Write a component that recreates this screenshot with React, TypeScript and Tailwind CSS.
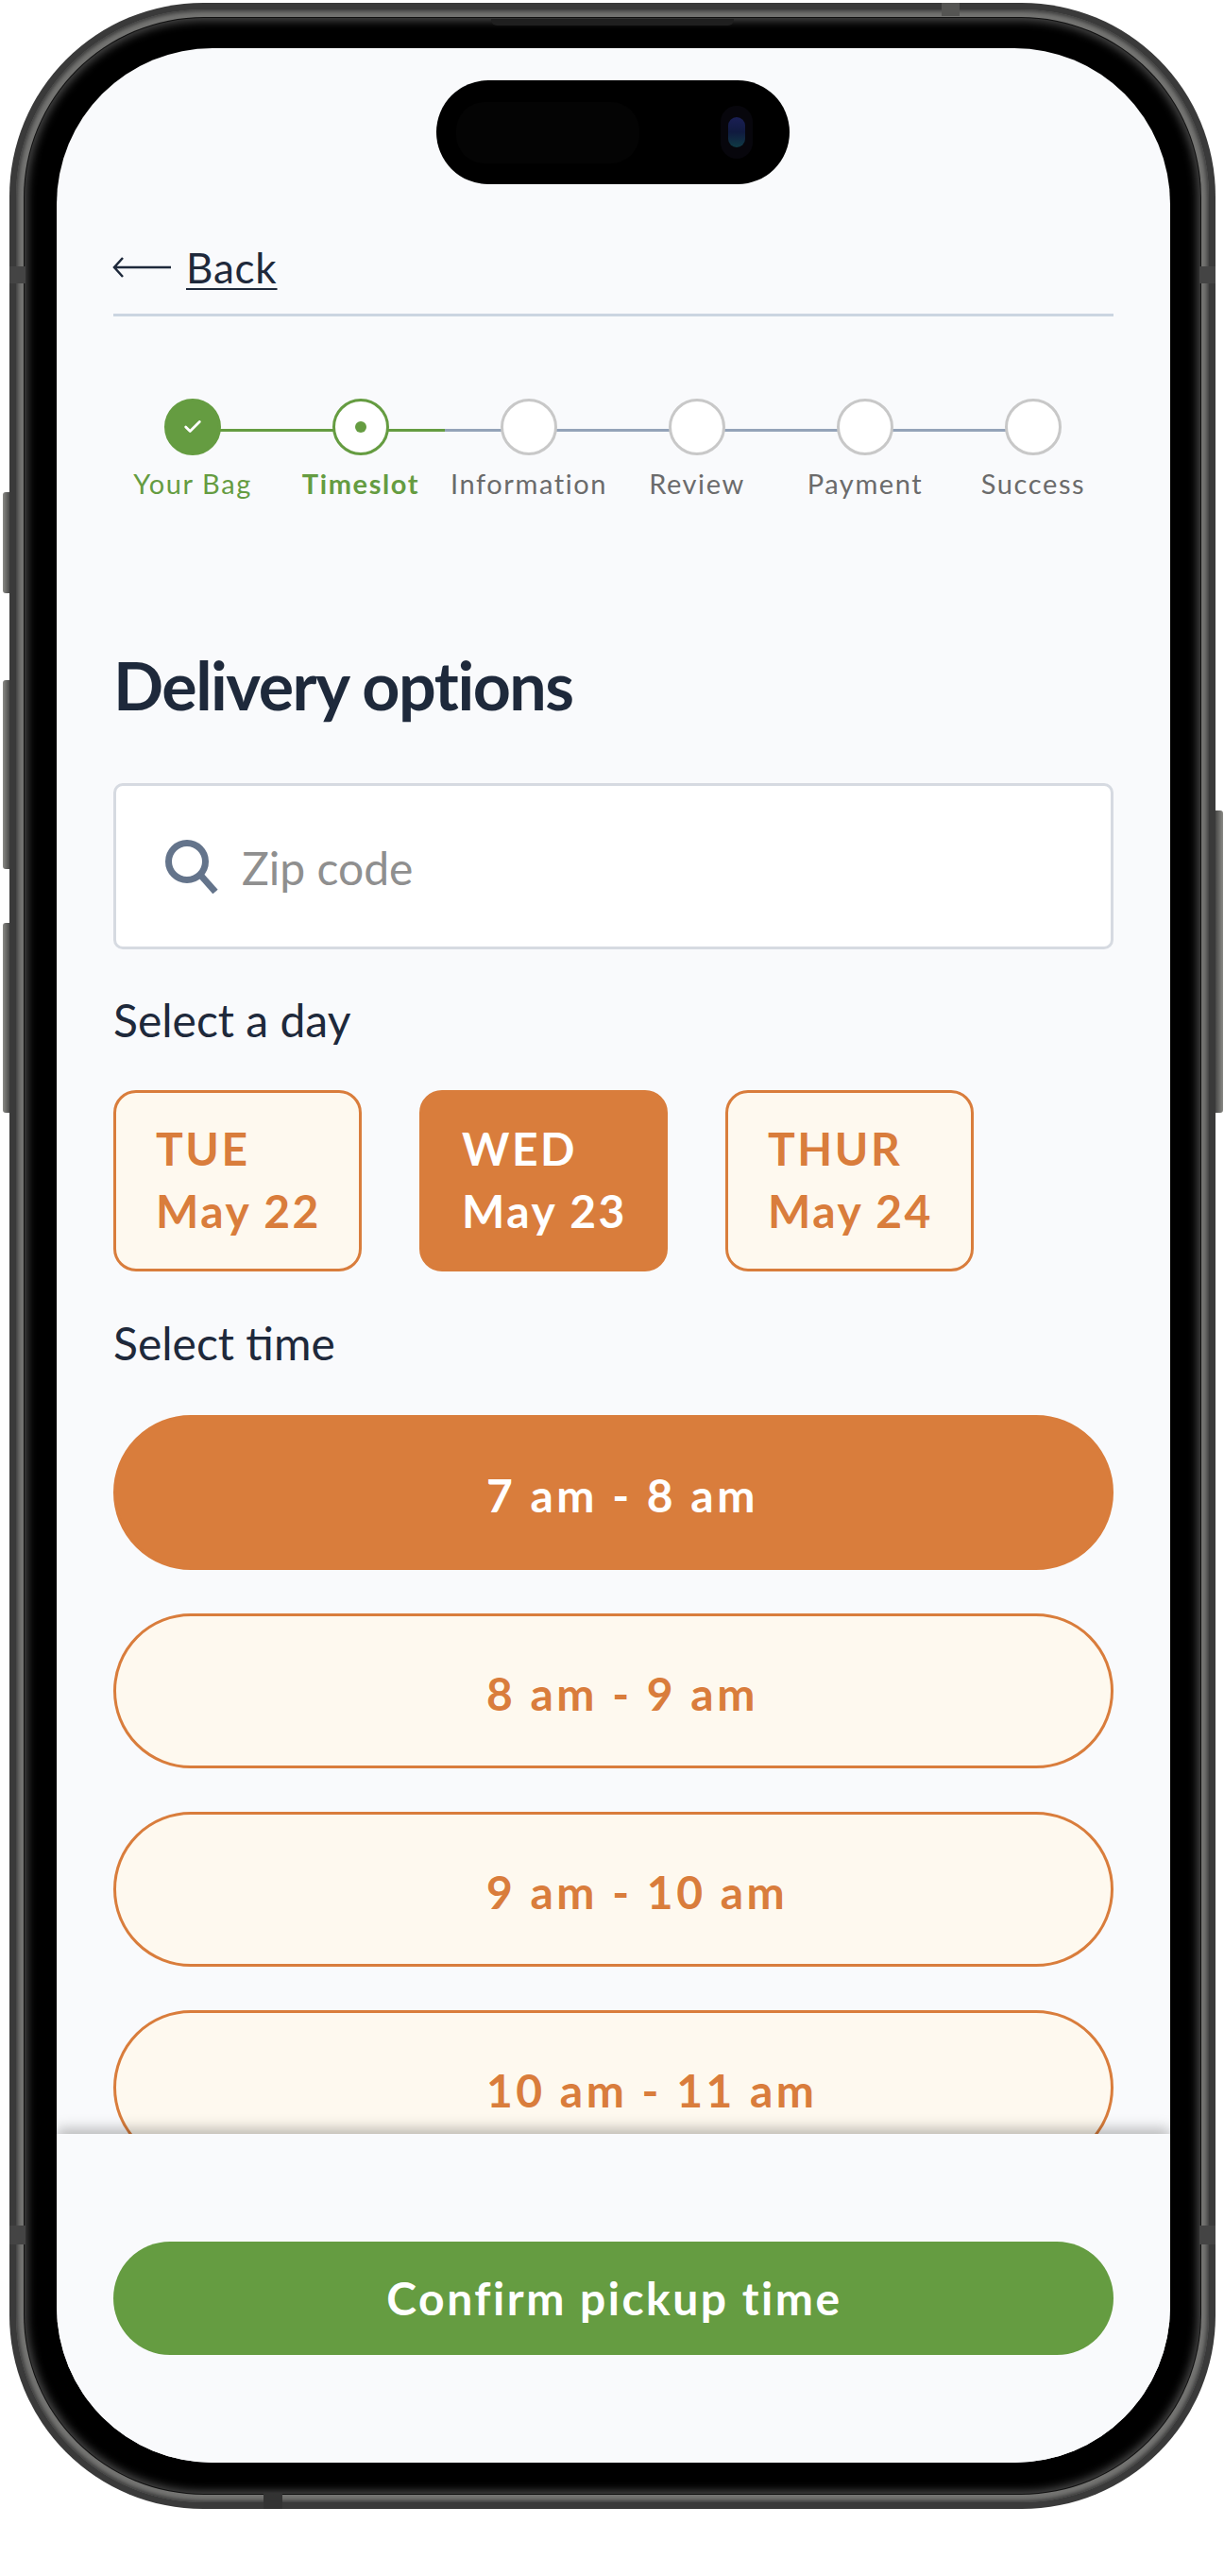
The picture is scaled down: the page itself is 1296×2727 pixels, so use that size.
import React from 'react';
import { Check } from 'lucide-react';

const steps = ['Your Bag', 'Timeslot', 'Information', 'Review', 'Payment', 'Success'];
const days = [
  { name: 'TUE', date: 'May 22', active: false },
  { name: 'WED', date: 'May 23', active: true },
  { name: 'THUR', date: 'May 24', active: false },
];
const times = ['7 am - 8 am', '8 am - 9 am', '9 am - 10 am', '10 am - 11 am'];

const Stepper = () => (
  <div className="mt-[87px] flex w-[1069px] -ml-[5px]">
    {steps.map((step, idx) => {
      const done = idx === 0;
      const current = idx === 1;
      return (
        <div key={step} className="relative flex w-[178px] flex-col items-center">
          {idx < steps.length - 1 && (
            <div className={`absolute left-[89px] top-[32px] h-[3px] w-[178px] ${idx === 0 ? 'bg-[#659c41]' : 'bg-[#94a3b8]'}`} />
          )}
          {idx === 1 && <div className="absolute left-[89px] top-[32px] h-[3px] w-[89px] bg-[#659c41] z-[1]" />}
          <div
            className={`relative z-10 flex h-[60px] w-[60px] items-center justify-center rounded-full border-[3px] ${
              done ? 'border-[#659c41] bg-[#659c41]' : current ? 'border-[#659c41] bg-white' : 'border-[#c8c8c8] bg-white'
            }`}
          >
            {done && <Check className="h-[22px] w-[22px] text-white" strokeWidth={3} />}
            {current && <div className="h-[12px] w-[12px] rounded-full bg-[#659c41]" />}
          </div>
          <span
            className={`mt-[12px] whitespace-nowrap text-[29px] leading-[36px] tracking-[1.6px] ${
              done ? 'text-[#659c41]' : current ? 'font-bold text-[#659c41]' : 'text-[#6b6b6b]'
            }`}
          >
            {step}
          </span>
        </div>
      );
    })}
  </div>
);

export default function App() {
  return (
    <div className="relative h-[2727px] w-[1296px] overflow-hidden bg-white font-['Lato',sans-serif]">
      {/* side buttons */}
      <div className="absolute left-[3px] top-[521px] h-[107px] w-[10px] rounded-l-[3px] bg-gradient-to-r from-[#8a8a86] to-[#333333]" />
      <div className="absolute left-[3px] top-[720px] h-[200px] w-[10px] rounded-l-[3px] bg-gradient-to-r from-[#8a8a86] to-[#333333]" />
      <div className="absolute left-[3px] top-[977px] h-[201px] w-[10px] rounded-l-[3px] bg-gradient-to-r from-[#8a8a86] to-[#333333]" />
      <div className="absolute left-[1284px] top-[858px] h-[320px] w-[11px] rounded-r-[3px] bg-gradient-to-l from-[#8a8a86] to-[#333333]" />

      {/* phone body */}
      <div className="absolute left-[10px] top-[3px] h-[2653px] w-[1277px] rounded-[205px] bg-[#3a3a3a] p-[7px]">
        <div className="h-full w-full rounded-[198px] bg-[#747472] p-[9px] shadow-[inset_0_0_4px_2px_#3a3a3a]">
          <div className="h-full w-full rounded-[190px] bg-black pl-[34px] pr-[32px] pt-[32px] pb-[33px] shadow-[inset_0_0_10px_3px_#4a4a4a] ring-1 ring-[#111111]">
            {/* screen */}
            <div className="relative flex h-full w-full flex-col overflow-hidden rounded-[165px] bg-[#f9fafc]">
              <div className="absolute left-[402px] top-[34px] z-30 flex h-[110px] w-[374px] items-center justify-between rounded-full bg-black pl-[21px] pr-[39px]">
                <div className="h-[65px] w-[194px] rounded-[30px] bg-[#040404]" />
                <div className="flex h-[56px] w-[34px] items-center justify-center rounded-full bg-[#07060c]">
                  <div className="h-[32px] w-[18px] rounded-full bg-gradient-to-b from-[#1a1f55] via-[#101a3f] to-[#0f3a44]" />
                </div>
              </div>

              <div className="flex min-h-0 flex-1 flex-col px-[60px] pt-[209px]">
                <div className="flex items-center gap-[16px] border-b-[3px] border-[#cbd5e1] pb-[26px]">
                  <svg className="-ml-[1px]" width="62" height="24" viewBox="0 0 62 24" fill="none" stroke="#1e293b" strokeWidth="2.5">
                    <path d="M62 12H2M11 2 2 12l9 10" />
                  </svg>
                  <span className="text-[44px] leading-[46px] tracking-[0.8px] text-[#1e293b] underline underline-offset-[5px] decoration-[2px]">Back</span>
                </div>

                <Stepper />

                <h1 className="mt-[153px] text-[70px] font-bold leading-[84px] tracking-[-1.5px] text-[#1e293b]">Delivery options</h1>

                <div className="mt-[62px] flex h-[176px] items-center gap-[24px] rounded-[10px] border-[3px] border-[#d6dae1] bg-white pl-[51px]">
                  <svg width="58" height="58" viewBox="0 0 58 58" fill="none" stroke="#64748b">
                    <circle cx="24" cy="24" r="19.5" strokeWidth="7" />
                    <path d="M38 38 54 56" strokeWidth="7" />
                  </svg>
                  <span className="pt-[3px] text-[48px] leading-none text-[#8f8f8f]">Zip code</span>
                </div>

                <p className="mt-[46px] text-[48px] leading-[58px] text-[#1e293b]">Select a day</p>

                <div className="mt-[45px] flex gap-[61px]">
                  {days.map((day) => (
                    <div
                      key={day.name}
                      className={`flex h-[192px] w-[263px] flex-col justify-center rounded-[24px] border-[3px] border-[#d97d3c] pb-[2px] pl-[42px] text-[48px] font-bold leading-[66px] tracking-[2.5px] ${
                        day.active ? 'bg-[#d97d3c] text-white' : 'bg-[#fef9ef] text-[#d97d3c]'
                      }`}
                    >
                      <span>{day.name}</span>
                      <span>{day.date}</span>
                    </div>
                  ))}
                </div>

                <p className="mt-[47px] text-[48px] leading-[58px] text-[#1e293b]">Select time</p>

                <div className="mt-[47px] flex min-h-0 flex-1 flex-col gap-[46px] overflow-hidden">
                  {times.map((time, idx) => (
                    <div
                      key={time}
                      className={`flex h-[164px] shrink-0 items-center rounded-full border-[3px] border-[#d97d3c] pl-[392px] pt-[6px] text-[48px] font-bold tracking-[3.5px] ${
                        idx === 0 ? 'bg-[#d97d3c] text-white' : 'bg-[#fef9ef] text-[#d97d3c]'
                      }`}
                    >
                      {time}
                    </div>
                  ))}
                </div>
              </div>

              {/* footer */}
              <div className="relative z-20 flex h-[348px] shrink-0 flex-col bg-[#f9fafc] px-[60px] pt-[114px] shadow-[0_-5px_14px_rgba(0,0,0,0.28)]">
                <button className="flex h-[120px] w-full items-center justify-center rounded-full bg-[#659c41] pl-[2px] text-[48px] font-bold tracking-[2.5px] text-white">
                  Confirm pickup time
                </button>
              </div>
            </div>
          </div>
        </div>
      </div>

      {/* speaker lip and antenna bands */}
      <div className="absolute left-[520px] top-[20px] h-[7px] w-[257px] rounded-b-[6px] bg-[#1f1f1f]" />
      <div className="absolute left-[997px] top-[3px] h-[14px] w-[19px] bg-[#555553]" />
      <div className="absolute left-[279px] top-[2640px] h-[16px] w-[20px] bg-[#333333]" />
      <div className="absolute left-[10px] top-[282px] h-[18px] w-[17px] bg-[#444444]" />
      <div className="absolute left-[1270px] top-[282px] h-[18px] w-[17px] bg-[#444444]" />
      <div className="absolute left-[10px] top-[2356px] h-[20px] w-[17px] bg-[#444444]" />
      <div className="absolute left-[1270px] top-[2356px] h-[20px] w-[17px] bg-[#444444]" />
    </div>
  );
}
